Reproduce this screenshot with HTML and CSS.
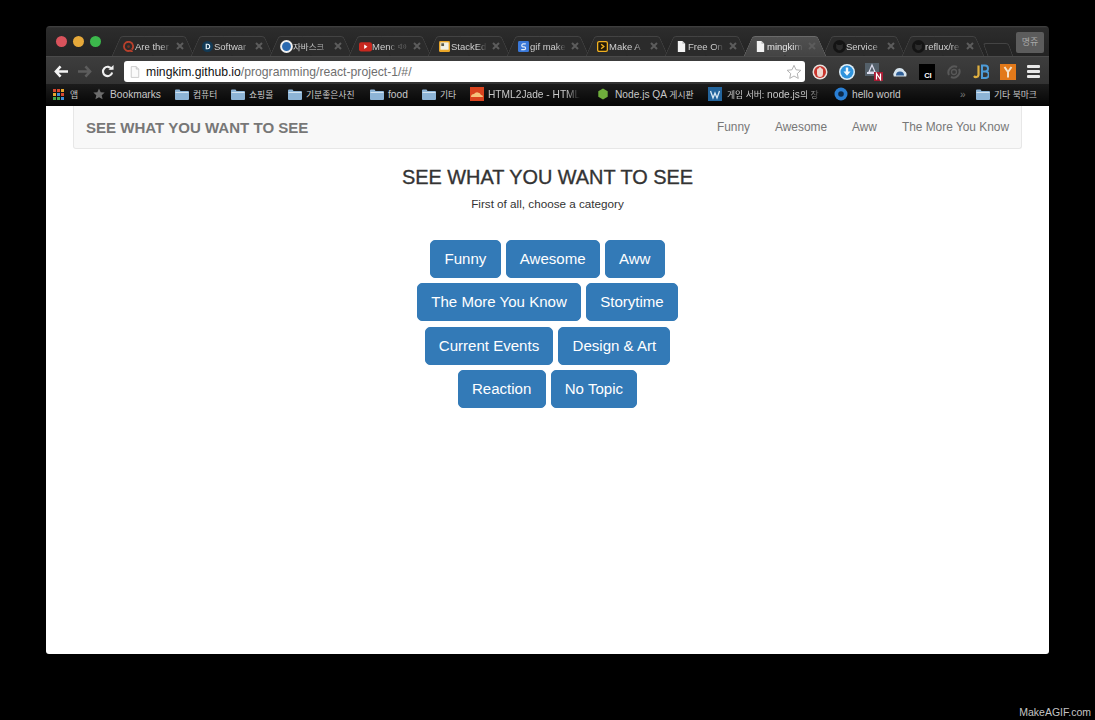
FILE: index.html
```html
<!DOCTYPE html>
<html lang="en">
<head>
<meta charset="utf-8">
<title>SEE WHAT YOU WANT TO SEE</title>
<link rel="stylesheet" href="styles.css">
</head>
<body>
<div class="window">
  <div class="tabstrip">
    <div class="lights"><i class="light red"></i><i class="light yellow"></i><i class="light green"></i></div>
    <div class="tabs">
      <div class="tab"><svg class="fav" viewBox="0 0 12 12"><path d="M9.500 9.500A5 5 0 1 0 8 10.500l2.500 1.200" fill="none" stroke="#b8402c" stroke-width="2"/><circle cx="6" cy="6" r="1.500" fill="#7a3020"/></svg><span class="label">Are ther</span><svg class="close" viewBox="0 0 8 8"><path d="M1 1l6 6M7 1L1 7"/></svg></div>
      <div class="tab"><svg class="fav" viewBox="0 0 12 12"><circle cx="6" cy="6" r="6" fill="#123a56"/><path d="M4 3h2a3 3 0 0 1 0 6H4zM5.300 4.200v3.600H6a1.800 1.800 0 0 0 0-3.600z" fill="#e8f2f8"/></svg><span class="label">Softwar</span><svg class="close" viewBox="0 0 8 8"><path d="M1 1l6 6M7 1L1 7"/></svg></div>
      <div class="tab"><svg class="fav big" viewBox="0 0 12 12"><circle cx="6" cy="6" r="5" fill="#2a69b0" stroke="#f0f0f0" stroke-width="1.800"/></svg><span class="label cjk tight">자바스크</span><svg class="close" viewBox="0 0 8 8"><path d="M1 1l6 6M7 1L1 7"/></svg></div>
      <div class="tab"><svg class="fav big" viewBox="0 0 12 12"><rect y="2" width="12" height="8.500" rx="2" fill="#c8281f"/><path d="M4.800 4.200l3 2-3 2z" fill="#fff"/></svg><span class="label short">Menc</span><svg class="sound" viewBox="0 0 12 8"><path d="M0 3h2l2-2v6L2 5H0zM6 2a2.500 2.500 0 0 1 0 4M8 1a4 4 0 0 1 0 6" fill="none" stroke="#5e5e5e"/></svg><svg class="close" viewBox="0 0 8 8"><path d="M1 1l6 6M7 1L1 7"/></svg></div>
      <div class="tab"><svg class="fav" viewBox="0 0 12 12"><rect width="12" height="12" rx="1.500" fill="#e9a628"/><rect x="1.500" y="1.500" width="9" height="8" fill="#f2f2e8"/><rect x="2.500" y="2.500" width="3" height="3" fill="#5b5b4a"/></svg><span class="label">StackEd</span><svg class="close" viewBox="0 0 8 8"><path d="M1 1l6 6M7 1L1 7"/></svg></div>
      <div class="tab"><svg class="fav" viewBox="0 0 12 12"><rect width="12" height="12" rx="1.500" fill="#3a78d8"/><path d="M8.500 3.200H5.200a1.800 1.800 0 0 0 0 3.300h1.600a1.500 1.500 0 0 1 0 3H3.500" fill="none" stroke="#dfe9f8" stroke-width="1.300"/></svg><span class="label">gif make</span><svg class="close" viewBox="0 0 8 8"><path d="M1 1l6 6M7 1L1 7"/></svg></div>
      <div class="tab"><svg class="fav" viewBox="0 0 12 12"><rect x=".7" y=".7" width="10.600" height="10.600" rx="1.500" fill="#221a08" stroke="#f0b020" stroke-width="1.400"/><path d="M4.500 3.500L7.500 6l-3 2.500" fill="none" stroke="#f0b020" stroke-width="1.500"/></svg><span class="label">Make A</span><svg class="close" viewBox="0 0 8 8"><path d="M1 1l6 6M7 1L1 7"/></svg></div>
      <div class="tab"><svg class="fav" viewBox="0 0 12 12"><path d="M2 0h5l3 3v9H2z" fill="#f2f2f2"/><path d="M7 0v3h3z" fill="#bdbdbd"/></svg><span class="label">Free On</span><svg class="close" viewBox="0 0 8 8"><path d="M1 1l6 6M7 1L1 7"/></svg></div>
      <div class="tab active"><svg class="fav" viewBox="0 0 12 12"><path d="M2 0h5l3 3v9H2z" fill="#f2f2f2"/><path d="M7 0v3h3z" fill="#bdbdbd"/></svg><span class="label">mingkim</span><svg class="close" viewBox="0 0 8 8"><path d="M1 1l6 6M7 1L1 7"/></svg></div>
      <div class="tab"><svg class="fav big" viewBox="0 0 12 12"><circle cx="6" cy="6" r="6" fill="#141414"/><path d="M3 3.500l1.500 1h3l1.500-1v4L7 9.500H5L3 7.500z" fill="#2c2c2c"/></svg><span class="label">Service</span><svg class="close" viewBox="0 0 8 8"><path d="M1 1l6 6M7 1L1 7"/></svg></div>
      <div class="tab"><svg class="fav big" viewBox="0 0 12 12"><circle cx="6" cy="6" r="6" fill="#141414"/><path d="M3 3.500l1.500 1h3l1.500-1v4L7 9.500H5L3 7.500z" fill="#2c2c2c"/></svg><span class="label">reflux/re</span><svg class="close" viewBox="0 0 8 8"><path d="M1 1l6 6M7 1L1 7"/></svg></div>
      <div class="newtab"></div>
    </div>
    <div class="profile cjk">명쥬</div>
  </div>

  <div class="toolbar">
    <svg class="nav" viewBox="0 0 16 14"><path d="M7 1.500L2 7l5 5.500M2.500 7H15" fill="none" stroke="#f4f4f4" stroke-width="2.800"/></svg>
    <svg class="nav dim" viewBox="0 0 16 14"><path d="M9 1.500L14 7l-5 5.500M13.500 7H1" fill="none" stroke="#5c5c5c" stroke-width="2.800"/></svg>
    <svg class="nav reload" viewBox="0 0 14 14"><path d="M11.500 4.500A5 5 0 1 0 12 8" fill="none" stroke="#f0f0f0" stroke-width="2.300"/><path d="M8 5h5.500V0z" fill="#f0f0f0"/></svg>
    <div class="omnibox">
      <svg class="page-ico" viewBox="0 0 12 14"><path d="M1.500.5h6l3 3v10h-9z" fill="#fafafa" stroke="#c4c4c4"/><path d="M7.500.5v3h3" fill="#e4e4e4" stroke="#c4c4c4"/></svg>
      <span class="url"><b>mingkim.github.io</b>/programming/react-project-1/#/</span>
      <svg class="star" viewBox="0 0 18 18"><path d="M9 1.500l2.300 5 5.400.6-4 3.700 1.100 5.400L9 13.500l-4.800 2.700 1.100-5.400-4-3.700 5.400-.6z" fill="#fff" stroke="#a8a8a8"/></svg>
    </div>
    <div class="exts">
      <svg class="ext" viewBox="0 0 16 16"><circle cx="8" cy="8" r="7.500" fill="#e8e2de"/><circle cx="8" cy="8" r="6" fill="#c8362e"/><path d="M5 6.500Q5 4 6.500 4.500 7 3 8 3t1.500 1.500Q11 4 11 6.500v3Q11 13 8 13t-3-3.500z" fill="#f0d8d0"/></svg>
      <svg class="ext" viewBox="0 0 16 16"><circle cx="8" cy="8" r="8" fill="#dff0fa"/><circle cx="8" cy="8" r="6.500" fill="#2f93dc"/><path d="M6.800 3.500h2.400v4h2.300L8 11.800 4.500 7.500h2.300z" fill="#f2f9fd"/></svg>
      <svg class="ext large" viewBox="0 0 20 20"><rect x="1" y="1" width="14" height="13" fill="#54606a"/><path d="M8 3l3 7H5z" fill="none" stroke="#dde" stroke-width="1.200"/><rect x="3" y="10" width="10" height="2" fill="#dde"/><rect x="10" y="10" width="9" height="9" fill="#a81c34"/><path d="M12.500 17.500v-6l4 6v-6" fill="none" stroke="#fff" stroke-width="1.200"/></svg>
      <svg class="ext" viewBox="0 0 18 14"><path d="M2 12a6 6 0 0 1 1-6 6 6 0 0 1 11 0 5 5 0 0 1 2 6z" fill="#d7e4ee"/><path d="M4.500 11a4.500 4.500 0 0 1 9 0z" fill="#2f5e96"/></svg>
      <div class="ci">CI</div>
      <svg class="ext" viewBox="0 0 16 16"><path d="M3 11a6 6 0 0 1 8-8M13 5a6 6 0 0 1-8 8" fill="none" stroke="#585858" stroke-width="2"/><circle cx="8" cy="8" r="2.500" fill="none" stroke="#585858" stroke-width="1.300"/></svg>
      <svg class="ext" viewBox="0 0 16 16"><path d="M5.500 1.500v9.500a2.500 2.500 0 0 1-4.500 1" fill="none" stroke="#e0b040" stroke-width="2.200"/><path d="M9 1.500h3a2.500 2.500 0 0 1 0 6H9h3.500a2.800 2.800 0 0 1 0 6.500H9z" fill="none" stroke="#4d9bd8" stroke-width="2"/></svg>
      <svg class="ext" viewBox="0 0 16 16"><rect width="16" height="16" fill="#e2791a"/><path d="M4.500 3L8 8l3.500-5M8 8v5.500" fill="none" stroke="#f6e2c8" stroke-width="2"/></svg>
      <div class="menu"><i></i><i></i><i></i></div>
    </div>
  </div>

  <div class="bookmarks">
    <div class="bm bm-apps"><svg class="grid" viewBox="0 0 11 11"><g fill="#d8472f"><rect width="3" height="3"/><rect x="4" width="3" height="3"/></g><rect x="8" width="3" height="3" fill="#e8a52c"/><rect y="4" width="3" height="3" fill="#e8a52c"/><rect x="4" y="4" width="3" height="3" fill="#3f8fd8"/><rect x="8" y="4" width="3" height="3" fill="#d8472f"/><rect y="8" width="3" height="3" fill="#46a84c"/><rect x="4" y="8" width="3" height="3" fill="#46a84c"/><rect x="8" y="8" width="3" height="3" fill="#3f8fd8"/></svg><span class="cjk">앱</span></div>
    <div class="bm bm-marks"><svg class="bi" viewBox="0 0 12 12"><path d="M6 .5l1.700 3.700 4 .4-3 2.700.9 4L6 9.300l-3.600 2 .9-4-3-2.700 4-.4z" fill="#6c6c6c"/></svg><span>Bookmarks</span></div>
    <div class="bm bm-a"><svg class="folder" viewBox="0 0 14 11"><use href="#fd"/></svg><span class="cjk">컴퓨터</span></div>
    <div class="bm bm-b"><svg class="folder" viewBox="0 0 14 11"><use href="#fd"/></svg><span class="cjk">쇼핑몰</span></div>
    <div class="bm bm-c"><svg class="folder" viewBox="0 0 14 11"><use href="#fd"/></svg><span class="cjk">기분좋은사진</span></div>
    <div class="bm bm-d"><svg class="folder" viewBox="0 0 14 11"><use href="#fd"/></svg><span>food</span></div>
    <div class="bm bm-e"><svg class="folder" viewBox="0 0 14 11"><use href="#fd"/></svg><span class="cjk">기타</span></div>
    <div class="bm bm-f"><svg class="bi wide" viewBox="0 0 14 14"><rect width="14" height="14" fill="#d9431e"/><path d="M1 10a3 3 0 0 1 3-3 4 4 0 0 1 7 1 2 2 0 0 1 2 2z" fill="#f6c27a"/></svg><span class="fade">HTML2Jade - HTML</span></div>
    <div class="bm bm-g"><svg class="bi" viewBox="0 0 12 14"><path d="M6 .5l5.500 3.200v6.600L6 13.500.5 10.300V3.700z" fill="#6fae3c"/></svg><span>Node.js QA <span class="cjk">게시판</span></span></div>
    <div class="bm bm-h"><svg class="bi wide" viewBox="0 0 14 14"><rect width="14" height="14" fill="#23649c"/><path d="M2.500 4l2.500 7 2-5 2 5 2.500-7" fill="none" stroke="#d8e8f4" stroke-width="1.300"/></svg><span class="fade"><span class="cjk">게임 서버:</span> node.js<span class="cjk">의 장</span></span></div>
    <div class="bm bm-i"><svg class="bi wide" viewBox="0 0 14 14"><circle cx="7" cy="7" r="6.500" fill="#2a7fd4"/><circle cx="7" cy="7" r="2.800" fill="#0c2a4a"/></svg><span>hello world</span></div>
    <div class="bm bm-more">»</div>
    <div class="bm bm-j"><svg class="folder" viewBox="0 0 14 11"><use href="#fd"/></svg><span class="cjk">기타 북마크</span></div>
    <svg class="defs" aria-hidden="true"><defs><g id="fd"><path d="M0 1.500Q0 .5 1 .5h3.500l1 1.500H13q1 0 1 1v7q0 1-1 1H1q-1 0-1-1z" fill="#8db4d6"/><rect x=".5" y="3" width="13" height="1" fill="#d2e3f0"/></g></defs></svg>
  </div>

  <div class="page">
    <nav class="navbar">
      <a class="brand">SEE WHAT YOU WANT TO SEE</a>
      <ul class="navlinks">
        <li>Funny</li>
        <li>Awesome</li>
        <li>Aww</li>
        <li>The More You Know</li>
      </ul>
    </nav>
    <h1 class="title">SEE WHAT YOU WANT TO SEE</h1>
    <p class="sub">First of all, choose a category</p>
    <div class="cats">
      <button class="cat">Funny</button>
      <button class="cat">Awesome</button>
      <button class="cat">Aww</button>
      <button class="cat">The More You Know</button>
      <button class="cat">Storytime</button>
      <button class="cat">Current Events</button>
      <button class="cat">Design &amp; Art</button>
      <button class="cat">Reaction</button>
      <button class="cat">No Topic</button>
    </div>
  </div>
</div>
<div class="credit">MakeAGIF.com</div>
</body>
</html>
```
FILE: styles.css
```css
* { box-sizing: border-box; }
html, body { margin: 0; height: 100%; }
body {
  background: #000;
  font-family: "Liberation Sans", Arial, sans-serif;
  display: flex;
  flex-direction: column;
  overflow: hidden;
}
.cjk { font-family: "Liberation Sans", "Noto Sans CJK KR", sans-serif; }

.window {
  width: 1003px;
  height: 628px;
  margin: 26px 0 0 46px;
  display: flex;
  flex-direction: column;
  border-radius: 4px 4px 3px 3px;
  overflow: hidden;
  flex: none;
}

/* tab strip */
.tabstrip {
  height: 31px;
  flex: none;
  display: flex;
  background: linear-gradient(#444 0, #2c2c2c 2px, #232323 100%);
  border-bottom: 1px solid #4a4a4a;
  position: relative;
}
.lights { display: flex; gap: 6px; width: 67px; padding: 10px 0 0 10px; flex: none; }
.light { width: 11px; height: 11px; border-radius: 50%; display: block; }
.red { background: #d9535c; }
.yellow { background: #e6a93a; }
.green { background: #3cb84c; }
.tabs { display: flex; align-items: flex-end; flex: none; width: 903px; height: 30px; }
.tab {
  position: relative;
  width: 79px;
  height: 20px;
  flex: none;
  display: flex;
  align-items: center;
  padding: 0 0 0 10px;
  color: #cfcfcf;
  font-size: 9.500px;
}
.tab::before, .tab::after {
  content: "";
  position: absolute;
  top: 0;
  bottom: 0;
  width: 50%;
  background: #2b2b2b;
  border-top: 1px solid #434343;
  z-index: 0;
}
.tab::before { left: 3px; border-left: 1px solid #434343; border-radius: 3px 0 0 0; transform: skewX(-24deg); }
.tab::after { right: 3px; border-right: 1px solid #434343; border-radius: 0 3px 0 0; transform: skewX(24deg); }
.tab.active::before, .tab.active::after { background: linear-gradient(#505050, #444); border-color: #6a6a6a; }
.tab.active { z-index: 2; color: #e8e8e8; }
.fav, .label, .close, .sound { position: relative; z-index: 1; }
.fav { width: 11px; height: 11px; flex: none; }
.fav.big { width: 13px; height: 13px; margin: 0 -1px; }
.label {
  width: 36px;
  margin-left: 1px;
  flex: none;
  white-space: nowrap;
  overflow: hidden;
  -webkit-mask-image: linear-gradient(90deg, #000 72%, transparent);
  mask-image: linear-gradient(90deg, #000 72%, transparent);
}
.label.tight { font-size: 8.500px; }
.label.short { width: 24px; }
.sound { width: 10px; height: 7px; margin-left: 2px; flex: none; }
.close { width: 8px; height: 8px; margin-left: 5px; flex: none; }
.close path { stroke: #5c5c5c; stroke-width: 2; fill: none; }
.newtab {
  width: 26px;
  height: 13px;
  margin: 0 0 0 3px;
  background: #262626;
  border: 1px solid #444;
  border-bottom: 0;
  border-radius: 3px 3px 0 0;
  transform: skewX(20deg);
  flex: none;
}
.profile {
  width: 28px;
  height: 21px;
  margin: 6px 0 0 0;
  background: #5c5c5c;
  border-radius: 2px;
  color: #a8a8a8;
  font-size: 9px;
  line-height: 21px;
  text-align: center;
  flex: none;
}

/* toolbar */
.toolbar {
  height: 27px;
  flex: none;
  display: flex;
  align-items: center;
  background: linear-gradient(#3d3d3d, #333);
  padding: 2px 0 0 8px;
}
.nav { width: 15px; height: 13px; flex: none; margin-right: 8px; }
.nav.reload { width: 13px; margin-right: 10px; margin-left: 1px; }
.omnibox {
  width: 681px;
  height: 21px;
  flex: none;
  background: #fff;
  border-radius: 3px;
  display: flex;
  align-items: center;
  padding: 0 3px 0 6px;
}
.page-ico { width: 10px; height: 12px; flex: none; }
.url { margin-left: 6px; font-size: 12.200px; color: #6f6f6f; white-space: nowrap; flex: 1; }
.url b { font-weight: 400; color: #111; }
.star { width: 16px; height: 16px; flex: none; }
.exts { display: flex; align-items: center; margin-left: 7px; gap: 10.800px; flex: none; }
.ext { width: 16px; height: 16px; flex: none; }
.ext.large { width: 20px; height: 20px; margin: 0 -2px; }
.ci {
  width: 16px;
  height: 16px;
  flex: none;
  background: #000;
  color: #fff;
  font-size: 7.500px;
  font-weight: 700;
  line-height: 7px;
  padding: 8px 0 0 5px;
}
.menu { display: flex; flex-direction: column; gap: 2px; width: 13px; margin-left: 1px; }
.menu i { display: block; height: 3px; background: #e8e8e8; border-radius: 1px; }

/* bookmarks bar */
.bookmarks {
  height: 22px;
  flex: none;
  display: flex;
  align-items: center;
  background: linear-gradient(#1c1c1c, #050505);
  color: #c8c8c8;
  font-size: 10.200px;
  white-space: nowrap;
  padding: 0 0 2px 7px;
}
.bookmarks .cjk { font-size: 8.800px; }
.bm { display: flex; align-items: center; gap: 4px; flex: none; }
.grid { width: 11px; height: 11px; }
.bi { width: 12px; height: 12px; flex: none; }
.bi.wide { width: 14px; height: 14px; }
.folder { width: 14px; height: 11px; flex: none; }
.fade {
  display: block;
  overflow: hidden;
  -webkit-mask-image: linear-gradient(90deg, #000 85%, transparent);
  mask-image: linear-gradient(90deg, #000 85%, transparent);
}
.bm-apps { width: 40px; gap: 6px; }
.bm-marks { width: 82px; gap: 5px; }
.bm-a { width: 56px; }
.bm-b { width: 57px; }
.bm-c { width: 82px; }
.bm-d { width: 52px; }
.bm-e { width: 48px; }
.bm-f { width: 127px; }
.bm-f .fade { width: 92px; }
.bm-g { width: 111px; gap: 6px; }
.bm-h { width: 126px; gap: 5px; }
.bm-h .fade { width: 96px; }
.bm-i { width: 126px; }
.bm-more { width: 16px; color: #777; font-size: 10px; }
.defs { width: 0; height: 0; position: absolute; }

/* page */
.page {
  flex: 1;
  background: #fff;
  display: flex;
  flex-direction: column;
  align-items: center;
  color: #333;
}
.navbar {
  width: 949px;
  height: 43px;
  flex: none;
  display: flex;
  align-items: center;
  justify-content: space-between;
  background: #f8f8f8;
  border: 1px solid #e7e7e7;
  border-top: 0;
  border-radius: 0 0 3px 3px;
  padding: 0 12px;
}
.brand { font-size: 15.050px; font-weight: 700; color: #777; }
.navlinks { display: flex; gap: 25px; margin: 0; padding: 0; list-style: none; font-size: 11.900px; color: #777; }
.title {
  margin: 17px 0 0;
  font-size: 19.900px;
  line-height: 22px;
  font-weight: 400;
  -webkit-text-stroke: .35px #333;
  color: #333;
}
.sub { margin: 7px 0 0; font-size: 11.700px; line-height: 17px; color: #333; }
.cats {
  width: 300px;
  margin-top: 28px;
  display: flex;
  flex-wrap: wrap;
  justify-content: center;
  gap: 5.330px 5px;
}
.cat {
  height: 38px;
  padding: 0 13.200px 1px;
  background: #337ab7;
  border: 1px solid #337ab7;
  border-radius: 5px;
  color: #fff;
  font: 15.050px "Liberation Sans", Arial, sans-serif;
}

.credit {
  margin-top: auto;
  align-self: flex-end;
  padding: 0 4px 1px 0;
  font-size: 10.500px;
  line-height: 14px;
  color: #c4c4c4;
}
```
